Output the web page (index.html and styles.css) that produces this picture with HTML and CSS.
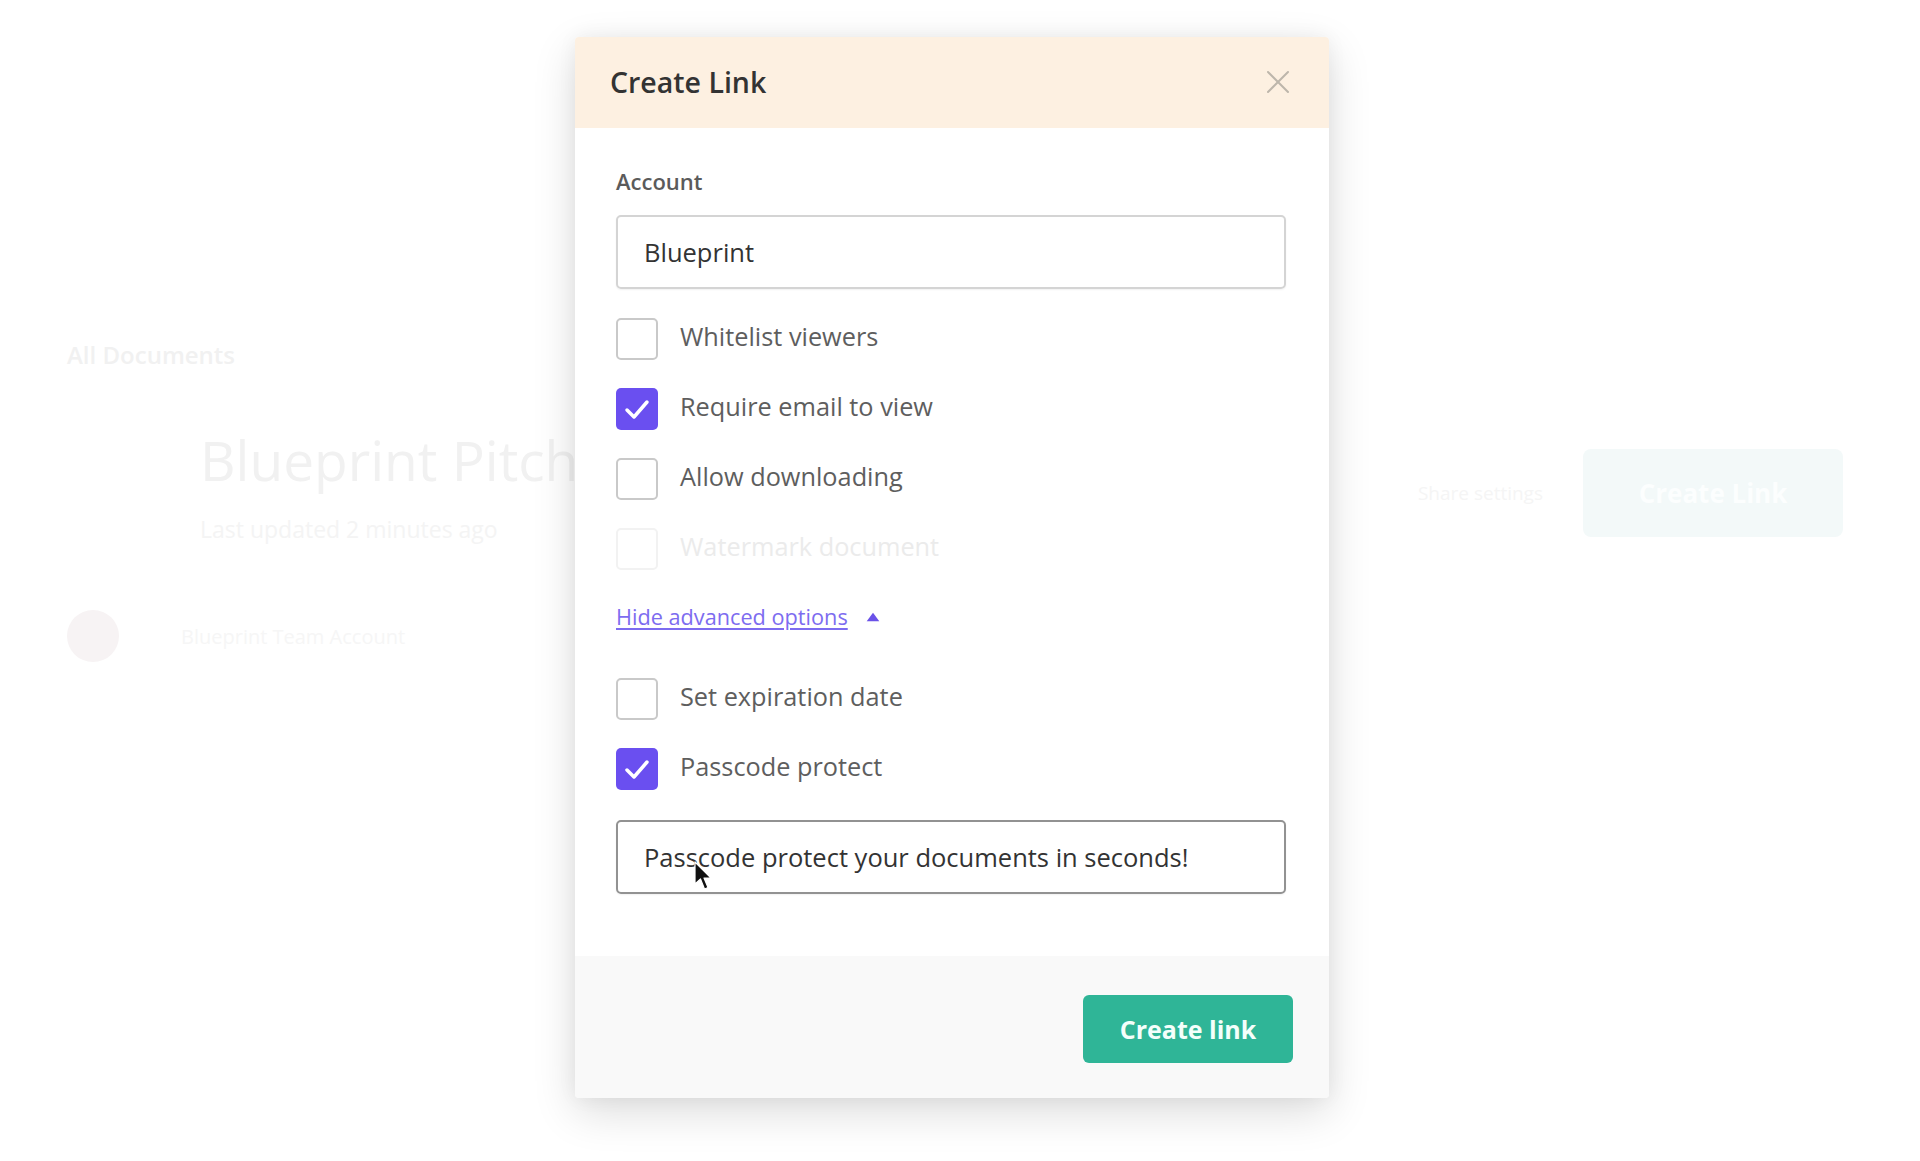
FILE: index.html
```html
<!DOCTYPE html>
<html lang="en">
<head>
<meta charset="utf-8">
<title>Create Link</title>
<link rel="stylesheet" href="styles.css">
</head>
<body>
<div class="page">
  <div class="crumb">All Documents</div>
  <div class="title-row">
    <div class="title-block">
      <div class="doc-title">Blueprint Pitch</div>
      <div class="doc-sub">Last updated 2 minutes ago</div>
    </div>
    <div class="actions">
      <span class="action-link">Share settings</span>
      <span class="action-btn">Create Link</span>
    </div>
  </div>
  <div class="owner">
    <span class="avatar"></span>
    <span class="owner-name">Blueprint Team Account</span>
  </div>
</div>

<div class="modal">
  <div class="modal-header">
    <h1 class="modal-title">Create Link</h1>
    <svg class="close" width="24" height="24" viewBox="0 0 24 24"><path d="M2 2 L22 22 M22 2 L2 22" stroke="#bdb6ab" stroke-width="2" fill="none" stroke-linecap="round"/></svg>
  </div>
  <div class="modal-body">
    <div class="field-label">Account</div>
    <div class="input">Blueprint</div>
    <div class="options">
      <div class="opt"><span class="box"></span><span class="opt-label">Whitelist viewers</span></div>
      <div class="opt"><span class="box checked"><svg width="42" height="42" viewBox="0 0 42 42"><polyline points="11,22 18,29 31,14" fill="none" stroke="#fff" stroke-width="3.5" stroke-linecap="round" stroke-linejoin="round"/></svg></span><span class="opt-label">Require email to view</span></div>
      <div class="opt"><span class="box"></span><span class="opt-label">Allow downloading</span></div>
      <div class="opt disabled"><span class="box"></span><span class="opt-label">Watermark document</span></div>
    </div>
    <div class="advanced"><span class="adv-link">Hide advanced options</span><svg class="tri" width="14" height="10" viewBox="0 0 14 10"><path d="M7 0.8 L13.3 9.2 L0.7 9.2 Z" fill="#6a52e8"/></svg></div>
    <div class="options">
      <div class="opt"><span class="box"></span><span class="opt-label">Set expiration date</span></div>
      <div class="opt"><span class="box checked"><svg width="42" height="42" viewBox="0 0 42 42"><polyline points="11,22 18,29 31,14" fill="none" stroke="#fff" stroke-width="3.5" stroke-linecap="round" stroke-linejoin="round"/></svg></span><span class="opt-label">Passcode protect</span></div>
    </div>
    <div class="input input-focus">Passcode protect your documents in seconds!</div>
  </div>
  <div class="modal-footer">
    <button class="btn">Create link</button>
  </div>
  <svg class="cursor" width="20" height="30" viewBox="0 0 20 30"><path d="M1 1 L1 23 L6.5 18 L10.5 28 L14 26.5 L10 17 L17 17 Z" fill="#111" stroke="#fff" stroke-width="1.2" stroke-linejoin="round"/></svg>
</div>
</body>
</html>
```

FILE: styles.css
```css
* { box-sizing: border-box; }
html, body { margin: 0; padding: 0; }
body {
  width: 1920px;
  height: 1161px;
  background: #ffffff;
  font-family: "Open Sans", "Noto Sans", sans-serif;
  overflow: hidden;
  position: relative;
}

/* faint background page */
.page {
  padding: 340px 77px 0 67px;
  color: #f1f1f1;
}
.crumb { font-size: 24px; font-weight: 600; color: #f1f1f1; line-height: 30px; }
.title-row {
  display: flex;
  justify-content: space-between;
  align-items: center;
  margin-top: 58px;
}
.title-block { padding-left: 133px; }
.doc-title {
  font-size: 55px;
  line-height: 64px;
  color: #f1f1f1;
  white-space: nowrap;
}
.doc-sub { font-size: 23px; color: #f4f4f4; margin-top: 22px; line-height: 30px; white-space: nowrap; }
.actions { display: flex; align-items: center; gap: 40px; margin-top: 14px; }
.action-link { font-size: 19px; color: #f5f5f5; }
.action-btn {
  width: 260px; height: 88px;
  display: flex; align-items: center; justify-content: center;
  background: #f3f9f9; border-radius: 8px;
  color: #fcfefe; font-size: 26px; font-weight: 700;
}
.owner { display: flex; align-items: center; gap: 62px; margin-top: 66px; padding-left: 0; }
.avatar { width: 52px; height: 52px; border-radius: 50%; background: #f7f3f4; }
.owner-name { font-size: 20px; color: #f6f6f6; }

/* modal */
.modal {
  position: absolute;
  left: 575px;
  top: 37px;
  width: 754px;
  background: #fff;
  border-radius: 4px;
  box-shadow: 0 14px 44px rgba(0, 0, 0, 0.14), 0 0 20px rgba(0, 0, 0, 0.05);
  overflow: hidden;
}
.modal-header {
  height: 91px;
  background: #fdf0e1;
  display: flex;
  align-items: center;
  justify-content: space-between;
  padding: 0 39px 2px 35px;
}
.modal-title {
  margin: 0;
  font-size: 28.5px;
  font-weight: 600;
  color: #333;
}
.close { display: block; }

.modal-body {
  padding: 38px 43px 62px 41px;
}
.field-label {
  font-size: 22px;
  font-weight: 600;
  color: #5b5b5b;
  line-height: 30px;
}
.input {
  margin-top: 19px;
  height: 74px;
  border: 2px solid #d4d4d4;
  border-radius: 5px;
  padding: 0 26px;
  display: flex;
  align-items: center;
  font-size: 25.5px;
  color: #333;
  box-shadow: 0 1px 2px rgba(0,0,0,0.06);
}
.input-focus {
  margin-top: 30px;
  border-color: #929292;
}
.options {
  display: flex;
  flex-direction: column;
  gap: 28px;
  margin-top: 29px;
}
.opt {
  display: flex;
  align-items: center;
  gap: 22px;
  height: 42px;
}
.box {
  width: 42px;
  height: 42px;
  flex: none;
  border: 2px solid #c9c9c9;
  border-radius: 5px;
  background: #fff;
  display: block;
}
.box.checked {
  border: none;
  background: #6a4ff0;
}
.box svg { display: block; }
.opt-label {
  font-size: 25.3px;
  color: #5e5e5e;
  line-height: 30px;
  padding-bottom: 6px;
}
.opt.disabled .box { border-color: #f2f2f2; }
.opt.disabled .opt-label { color: #ebebeb; }

.advanced {
  margin-top: 34px;
  display: flex;
  align-items: center;
  gap: 18px;
  height: 26px;
}
.adv-link {
  font-size: 21.7px;
  color: #7d6cf0;
  text-decoration: underline;
  text-underline-offset: 3px;
  line-height: 26px;
}
.tri { display: block; }
.advanced + .options { margin-top: 48px; }

.modal-footer {
  background: #f9f9f9;
  height: 142px;
  display: flex;
  justify-content: flex-end;
  align-items: flex-start;
  padding: 39px 36px 0 0;
}
.btn {
  width: 210px;
  height: 68px;
  border: none;
  border-radius: 6px;
  background: #2fb597;
  color: #f4fffb;
  font-family: "Open Sans", "Noto Sans", sans-serif;
  font-size: 25px;
  font-weight: 700;
}
.cursor {
  position: absolute;
  left: 119px;
  top: 824px;
}
```
